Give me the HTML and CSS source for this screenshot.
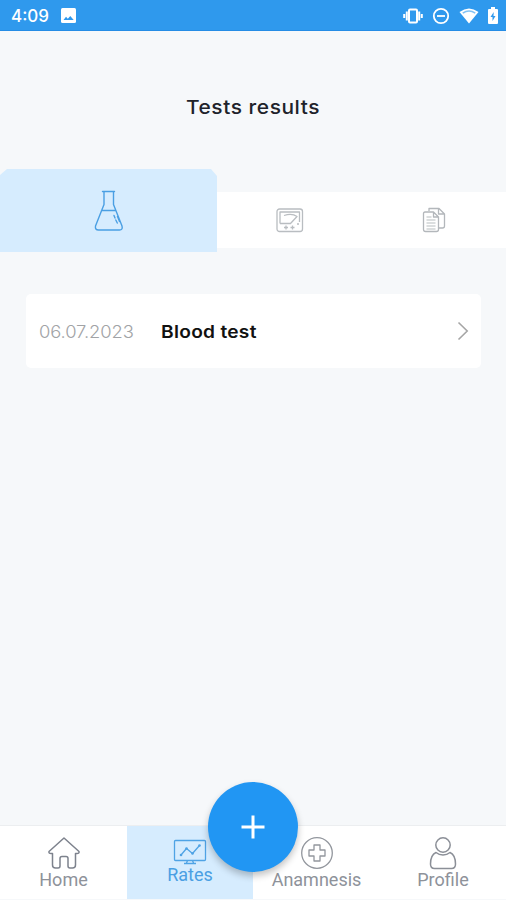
FILE: index.html
```html
<!DOCTYPE html>
<html lang="en">
<head>
<meta charset="utf-8">
<title>Tests results</title>
<link rel="stylesheet" href="styles.css">
</head>
<body>
<div class="app">
  <header class="status">
    <span class="clock">4:09</span>
    <svg class="photo" width="15" height="15" viewBox="0 0 15 15"><rect width="15" height="15" rx="1.5" fill="#fff"/><path d="M2.5 12 5 8.800l1.800 2L9.300 8l3.400 4z" fill="#2f99ed"/></svg>
    <div class="signals">
      <svg width="20" height="16" viewBox="0 0 20 16" fill="none" stroke="#fff" stroke-width="2"><rect x="6" y="1.500" width="8" height="13" rx="1"/><path d="M3.800 3.500v9M16.200 3.500v9M1.200 6v4M18.800 6v4" stroke-width="2"/></svg>
      <svg width="18" height="18" viewBox="0 0 18 18" fill="none" stroke="#fff" stroke-width="1.800"><circle cx="9" cy="9" r="7.200"/><path d="M5 9h8"/></svg>
      <svg width="20" height="16" viewBox="0 0 20 16"><path d="M0.500 4Q10-3 19.500 4L10 15.500z" fill="#fff"/><path d="M3.300 4.600Q10 0 16.700 4.600L15.800 5.700Q10 1.800 4.200 5.700z" fill="#2f99ed" opacity=".6"/></svg>
      <svg width="10" height="17" viewBox="0 0 10 17"><path d="M3 0h4v2h2q1 0 1 1v13q0 1-1 1H1q-1 0-1-1V3q0-1 1-1h2z" fill="#fff"/><path d="M5.700 5 2.500 10h2v4l3-5h-2z" fill="#2f99ed"/></svg>
    </div>
  </header>
  <h1 class="title">Tests results</h1>
  <div class="tabs">
    <div class="tab tab-active">
      <svg width="30" height="42" viewBox="0 0 30 42" fill="none" stroke="#4a9fe3" stroke-width="1.400" stroke-linecap="round" stroke-linejoin="round"><path d="M8.500 1.500h12M10 1.500V14.500L1.500 36Q.8 40 4.500 40h21Q29 40 28 36L19.500 14.500V1.500M7.500 20.500h14M20 25.500l1 2.500M21.800 30l1.500 3M23.500 26.500l2 5"/></svg>
    </div>
    <div class="tab-rest">
      <div class="tab">
        <svg width="28" height="25" viewBox="0 0 28 25" fill="none" stroke="#b9bdc1" stroke-width="1.300" stroke-linejoin="round"><rect x="1" y="1" width="25.500" height="22.500" rx="2.500"/><path d="M4 15.500V4h19.500v10M4 15.500h10.500L21 8.500q-5-3.500-13-1M10 17.500v4M8 19.500h4M16.500 17.500v4M14.500 19.500h4M21 16h2"/></svg>
      </div>
      <div class="tab">
        <svg width="24" height="26" viewBox="0 0 24 26" fill="none" stroke="#b3b7bb" stroke-width="1.300" stroke-linejoin="round"><path d="M7 4V1.500h10L22.500 7v12q0 2-2 2H17M16.500 1.500V7h6"/><path d="M3 5h8.500L16.500 10v12.500q0 2-2 2H3.500q-2 0-2-2v-16Q1.500 5 3 5zM11.500 5v5h5"/><path d="M4.500 10h5M4.500 13h9M4.500 16h9M4.500 19h9M4.500 22h9" stroke="#d0d3d5"/></svg>
      </div>
    </div>
  </div>
  <main class="list">
    <div class="card">
      <span class="date">06.07.2023</span>
      <span class="name">Blood test</span>
      <svg class="chevron" width="12" height="20" viewBox="0 0 12 20" fill="none" stroke="#a5a5a5" stroke-width="1.600"><path d="m1.500 1.500 8.700 8.500-8.700 8.500"/></svg>
    </div>
  </main>
  <nav class="nav">
    <div class="item">
      <svg width="34" height="34" viewBox="0 0 34 34" fill="none" stroke="#7d828d" stroke-width="1.500" stroke-linejoin="round"><path d="M17 2 2 15.500Q1.500 17.500 4 17.500H5.500V29q0 3 3 3H11q2 0 2-2v-7.500q0-2 2-2h4q2 0 2 2V30q0 2 2 2h2.500q3 0 3-3V17.500H30q2.500 0 2-2z"/></svg>
      <span>Home</span>
    </div>
    <div class="item item-active">
      <svg width="34" height="26" viewBox="0 0 34 26" fill="none" stroke="#4fa3e5" stroke-width="1.300" stroke-linejoin="round"><rect x="1.500" y="1.500" width="31" height="20" rx="1"/><path d="m8 16 5.500-6.500 6 5 7-8M14.500 21.500 13.500 24M19.500 21.500l1 2.500M11 24.500h12"/><g fill="#4fa3e5" stroke="none"><circle cx="8" cy="16" r="1.300"/><circle cx="13.500" cy="9.500" r="1.300"/><circle cx="19.500" cy="14.500" r="1.300"/><circle cx="26.500" cy="6.500" r="1.300"/></g></svg>
      <span>Rates</span>
    </div>
    <div class="item">
      <svg width="34" height="34" viewBox="0 0 34 34" fill="none" stroke="#92969d" stroke-width="1.300" stroke-linejoin="round"><circle cx="17" cy="17" r="15.300"/><path d="M14 9h6v5h5v6h-5v5h-6v-5H9v-6h5z"/></svg>
      <span>Anamnesis</span>
    </div>
    <div class="item">
      <svg width="34" height="34" viewBox="0 0 34 34" fill="none" stroke="#8b8f97" stroke-width="1.500" stroke-linejoin="round"><circle cx="17" cy="9" r="7.200"/><path d="M10 16.500Q4.500 19 4.500 28q0 4.500 4 4.500h17q4 0 4-4.500 0-9-5.500-11.500-3 2.500-7 2.500t-7-2.500z"/></svg>
      <span>Profile</span>
    </div>
    <button class="fab" aria-label="Add"><svg width="24" height="24" viewBox="0 0 24 24" stroke="#fff" stroke-width="3"><path d="M12 .5v23M.5 12h23"/></svg></button>
  </nav>
</div>
</body>
</html>
```
FILE: styles.css
```css
* { box-sizing: border-box; }
body { margin: 0; background: #fff; font-family: Inter, "Liberation Sans", sans-serif; }
svg { display: block; flex: none; }
.app { width: 506px; height: 900px; display: flex; flex-direction: column; background: #f6f8fa; overflow: hidden; }
.status { height: 31px; flex: none; display: flex; align-items: center; padding: 1px 8px 0 11px; background: #2f99ed; color: #fff; border-bottom: 1px solid #258ce5; }
.clock { width: 50px; font: 500 17px/30px Inter, sans-serif; white-space: nowrap; }
.signals { display: flex; align-items: center; gap: 9px; margin-left: auto; }
.title { margin: 64px 0 0; height: 26px; text-align: center; font-size: 19px; line-height: 26px; font-weight: 500; letter-spacing: .5px; color: #20222a; transform: scaleX(1.1); }
.tabs { margin-top: 48px; height: 83px; flex: none; display: flex; align-items: center; }
.tab { flex: 1; display: flex; align-items: center; justify-content: center; }
.tab-active { flex: 0 0 217px; height: 83px; background: #d6ecfe; clip-path: polygon(0 6px, 7px 0, 211px 0, 217px 7px, 217px 100%, 0 100%); }
.tab-rest { flex: 1; height: 56px; margin-top: 19px; display: flex; background: #fff; }
.tab-rest .tab { padding-left: 1px; }
.list { padding: 42px 25px 0 26px; }
.card { height: 74px; display: flex; align-items: center; padding: 0 12px 0 13px; background: #fff; border-radius: 5px; }
.date, .name { font-size: 17.500px; line-height: 24px; padding-top: 1px; white-space: nowrap; transform-origin: left center; }
.date { width: 122px; font-weight: 300; color: #a1a3a6; letter-spacing: -.1px; transform: scaleX(1.05); }
.name { font-weight: 600; color: #111; letter-spacing: .25px; transform: scaleX(1.095); }
.chevron { margin-left: auto; }
.nav { position: relative; margin: auto 0 1px; height: 74px; flex: none; display: grid; grid-template-columns: 127px 126px 127px 126px; background: #fff; border-top: 1px solid #eceef0; }
.item { display: flex; flex-direction: column; align-items: center; padding-top: 10px; color: #8e929a; font: 18px/20px Roboto, sans-serif; }
.item-active { padding-top: 13px; color: #4a9fe3; background: #d6ecfe; }
.fab { position: absolute; left: 208px; top: -44px; width: 90px; height: 90px; padding: 0; border: 0; border-radius: 50%; display: flex; align-items: center; justify-content: center; background: #2196f3; box-shadow: 0 4px 7px rgba(0,0,0,.24); }
```
